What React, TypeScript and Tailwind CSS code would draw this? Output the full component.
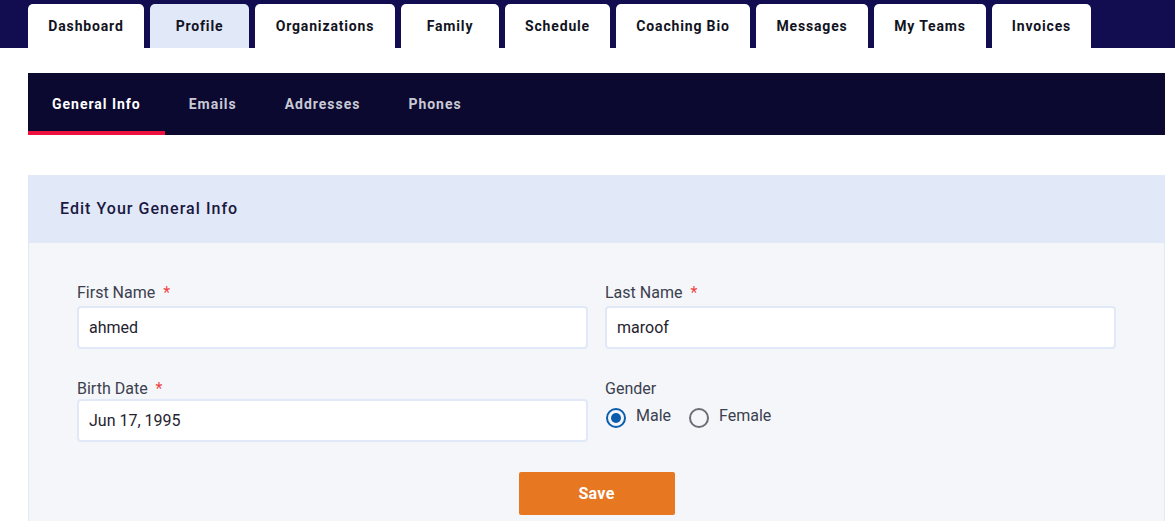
import { useState } from 'react'

const topTabs = [
  { label: 'Dashboard', width: 'w-[116px]' },
  { label: 'Profile', width: 'w-[99px]', active: true },
  { label: 'Organizations', width: 'w-[140px]' },
  { label: 'Family', width: 'w-[98px]' },
  { label: 'Schedule', width: 'w-[105px]' },
  { label: 'Coaching Bio', width: 'w-[134px]' },
  { label: 'Messages', width: 'w-[112px]' },
  { label: 'My Teams', width: 'w-[112px]' },
  { label: 'Invoices', width: 'w-[99px]' },
]

const subTabs = ['General Info', 'Emails', 'Addresses', 'Phones']

function Label({ text, required }: { text: string; required?: boolean }) {
  return (
    <label className="block text-[16px] leading-[18px] text-[#3b3f4e]">
      {text}
      {required && <span className="ml-[8px] text-[#ef4444]">*</span>}
    </label>
  )
}

function TextField({ value }: { value: string }) {
  return (
    <div className="flex h-[43px] items-center rounded-[4px] border-2 border-[#e1e8f7] bg-white px-[10px] text-[16px] text-[#1f2330]">
      {value}
    </div>
  )
}

function Radio({ label, checked }: { label: string; checked?: boolean }) {
  return (
    <div className="flex items-center gap-[10px]">
      {checked ? (
        <span className="flex size-[20px] items-center justify-center rounded-full border-2 border-[#0b5cad]">
          <span className="size-[10px] rounded-full bg-[#0b5cad]" />
        </span>
      ) : (
        <span className="size-[20px] rounded-full border-2 border-[#6b6e75]" />
      )}
      <span className="-mt-[4px] text-[16px] text-[#3b3f4e]">{label}</span>
    </div>
  )
}

export default function App() {
  const [gender] = useState('male')

  return (
    <div className="min-h-[522px] bg-white font-['Roboto',sans-serif]">
      <div className="flex h-[48px] items-end gap-[6px] bg-[#110d50] pl-[28px]">
        {topTabs.map((tab) => (
          <div
            key={tab.label}
            className={`flex h-[44px] items-center justify-center rounded-t-[5px] text-[14px] font-bold tracking-[0.06em] text-[#111322] ${tab.width} ${
              tab.active ? 'bg-[#e1e8f7]' : 'bg-white'
            }`}
          >
            {tab.label}
          </div>
        ))}
      </div>

      <div className="pl-[28px] pr-[10px]">
        <div className="mt-[25px] flex h-[62px] bg-[#0b0930]">
          {subTabs.map((tab, i) => (
            <div
              key={tab}
              className={`flex items-center border-b-4 px-6 pt-[5px] text-[14px] font-bold tracking-[0.07em] ${
                i === 0
                  ? 'border-[#ee1140] text-white'
                  : 'border-transparent text-[#c9c9d6]'
              }`}
            >
              {tab}
            </div>
          ))}
        </div>

        <div className="mt-[40px] border-x border-[#e1e8f7]">
          <div className="flex h-[68px] items-center bg-[#e1e8f7] px-[31px] text-[16px] font-medium tracking-[0.065em] text-[#1a1840]">
            Edit Your General Info
          </div>
          <div className="bg-[#f4f6fa] px-[48px] pt-[41px] pb-[6px]">
            <div className="grid grid-cols-2 gap-x-[17px]">
              <div className="flex flex-col gap-[4px]">
                <Label text="First Name" required />
                <TextField value="ahmed" />
              </div>
              <div className="flex flex-col gap-[4px]">
                <Label text="Last Name" required />
                <TextField value="maroof" />
              </div>
              <div className="mt-[31px] flex flex-col gap-[1px]">
                <Label text="Birth Date" required />
                <TextField value="Jun 17, 1995" />
              </div>
              <div className="mt-[31px] flex flex-col gap-[10px]">
                <Label text="Gender" />
                <div className="flex items-center gap-[18px] pl-[1px]">
                  <Radio label="Male" checked={gender === 'male'} />
                  <Radio label="Female" checked={gender === 'female'} />
                </div>
              </div>
            </div>
            <div className="mt-[30px] flex justify-center">
              <button className="h-[43px] w-[156px] rounded-[2px] bg-[#e87722] text-[16px] font-bold tracking-[0.02em] text-white">
                Save
              </button>
            </div>
          </div>
        </div>
      </div>
    </div>
  )
}
